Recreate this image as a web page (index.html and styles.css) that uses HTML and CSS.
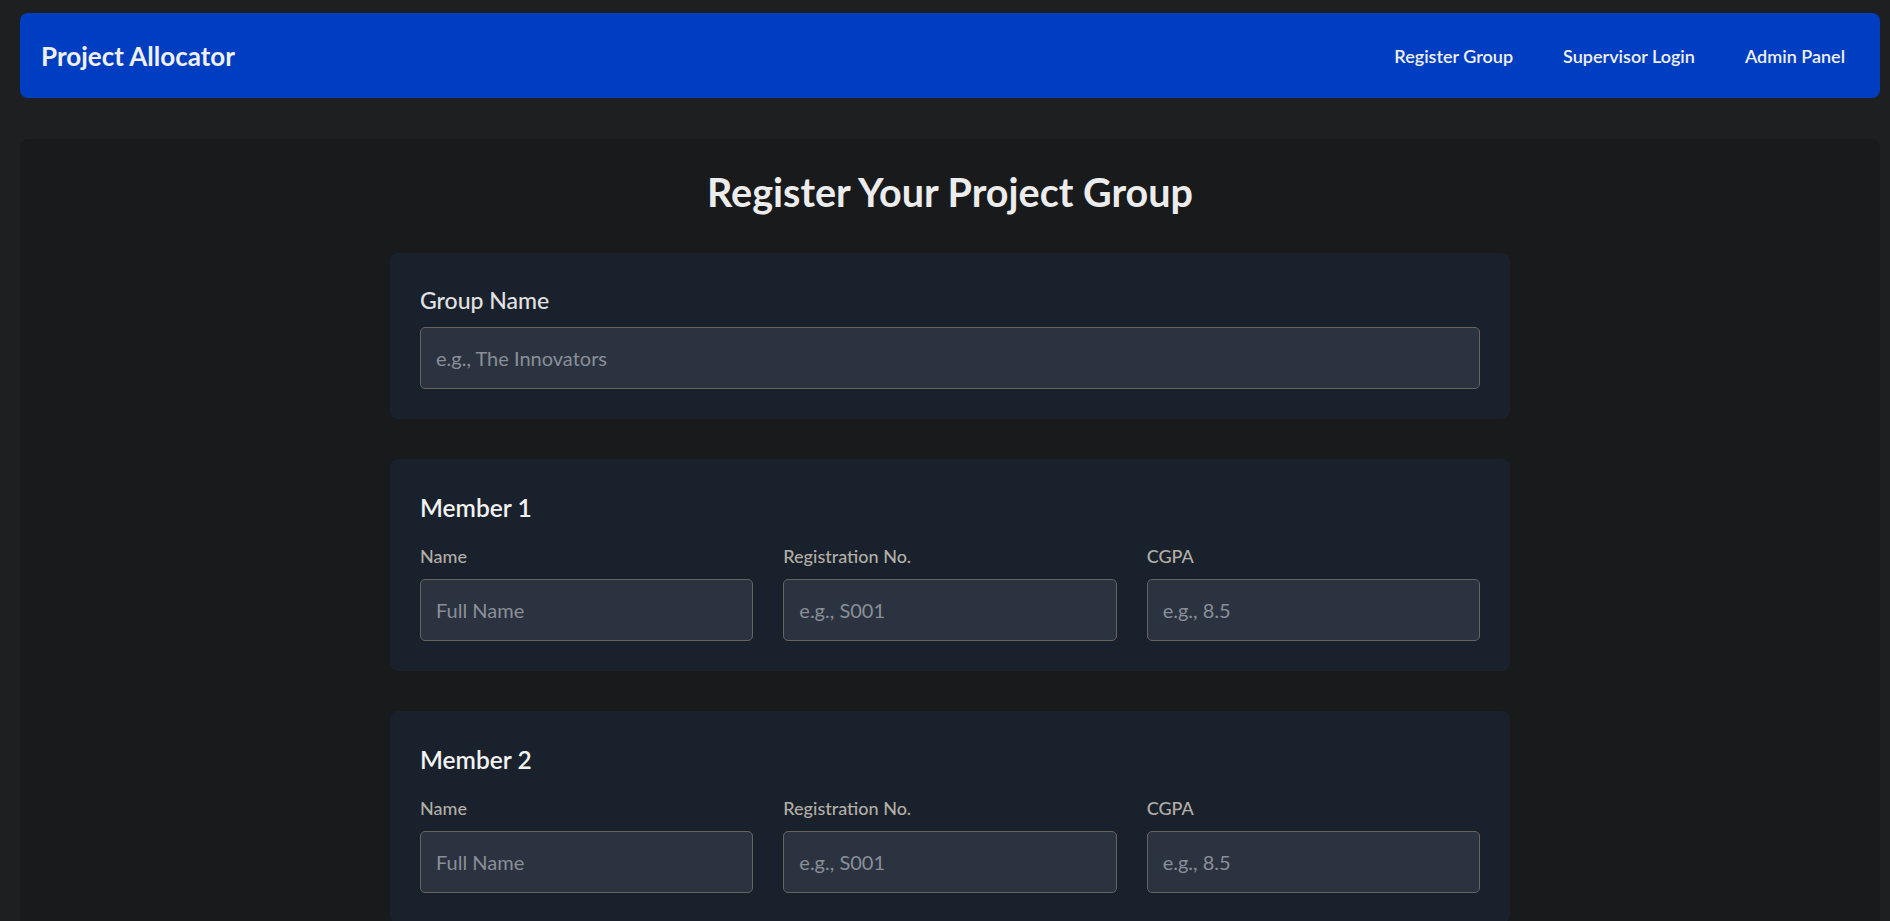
FILE: index.html
```html
<!DOCTYPE html>
<html lang="en">
<head>
<meta charset="utf-8">
<title>Project Allocator</title>
<link rel="stylesheet" href="styles.css">
</head>
<body>
<nav class="navbar">
  <a class="brand" href="#">Project Allocator</a>
  <div class="nav-links">
    <a href="#">Register Group</a>
    <a href="#">Supervisor Login</a>
    <a href="#">Admin Panel</a>
  </div>
</nav>
<main class="page">
  <h1 class="title">Register Your Project Group</h1>
  <form class="form">
    <section class="card">
      <label class="group-label" for="g">Group Name</label>
      <input id="g" class="field" type="text" placeholder="e.g., The Innovators">
    </section>
    <section class="card">
      <h3 class="member-title">Member 1</h3>
      <div class="grid">
        <div class="cell"><label class="small-label">Name</label><input class="field" placeholder="Full Name"></div>
        <div class="cell"><label class="small-label">Registration No.</label><input class="field" placeholder="e.g., S001"></div>
        <div class="cell"><label class="small-label">CGPA</label><input class="field" placeholder="e.g., 8.5"></div>
      </div>
    </section>
    <section class="card">
      <h3 class="member-title">Member 2</h3>
      <div class="grid">
        <div class="cell"><label class="small-label">Name</label><input class="field" placeholder="Full Name"></div>
        <div class="cell"><label class="small-label">Registration No.</label><input class="field" placeholder="e.g., S001"></div>
        <div class="cell"><label class="small-label">CGPA</label><input class="field" placeholder="e.g., 8.5"></div>
      </div>
    </section>
  </form>
</main>
</body>
</html>
```
FILE: styles.css
```css
* { box-sizing: border-box; }
html, body { margin: 0; }
body {
  background: #1e1f21;
  padding: 13px 10px 0 20px;
  font-family: "Lato", "Noto Sans", sans-serif;
  color: #ececec;
  overflow: hidden;
}
.navbar {
  height: 85px;
  display: flex;
  align-items: center;
  justify-content: space-between;
  padding: 0 35px 0 21px;
  background: #003ec1;
  border-radius: 8px;
}
.brand {
  color: #f0f0f0;
  text-decoration: none;
  font-weight: 700;
  font-size: 26px;
}
.nav-links { display: flex; gap: 50px; }
.nav-links a {
  color: #f0f0f0;
  text-decoration: none;
  font-weight: 600;
  font-size: 18px;
}
.page {
  margin-top: 41px;
  background: #191a1c;
  border-radius: 8px;
  padding: 29px 0 40px;
  min-height: 900px;
}
.title {
  margin: 0 0 38px;
  text-align: center;
  font-size: 39.5px;
  line-height: 1.2;
  font-weight: 700;
  color: #ececec;
}
.form {
  width: 1120px;
  margin: 0 auto;
  display: flex;
  flex-direction: column;
  gap: 40px;
}
.card {
  background: #19212c;
  border-radius: 8px;
  padding: 30px;
}
.group-label {
  display: block;
  font-size: 23px;
  line-height: 34px;
  font-weight: 500;
  color: #e2e2e2;
  margin-bottom: 10px;
}
.field {
  display: block;
  width: 100%;
  height: 62px;
  padding: 0 15px;
  background: #2b3341;
  border: 1px solid #67635d;
  border-radius: 5px;
  color: #e8e8e8;
  font-family: inherit;
  font-size: 20px;
  outline: none;
}
.field::placeholder { color: #8a8f97; }
.member-title {
  margin: 0 0 16px;
  font-size: 24.5px;
  line-height: 38px;
  font-weight: 600;
  color: #f2f2f2;
}
.grid {
  display: grid;
  grid-template-columns: repeat(3, 1fr);
  gap: 30px;
}
.small-label {
  display: block;
  font-size: 18px;
  line-height: 27px;
  font-weight: 500;
  color: #b3aea6;
  margin-bottom: 9px;
}
```
